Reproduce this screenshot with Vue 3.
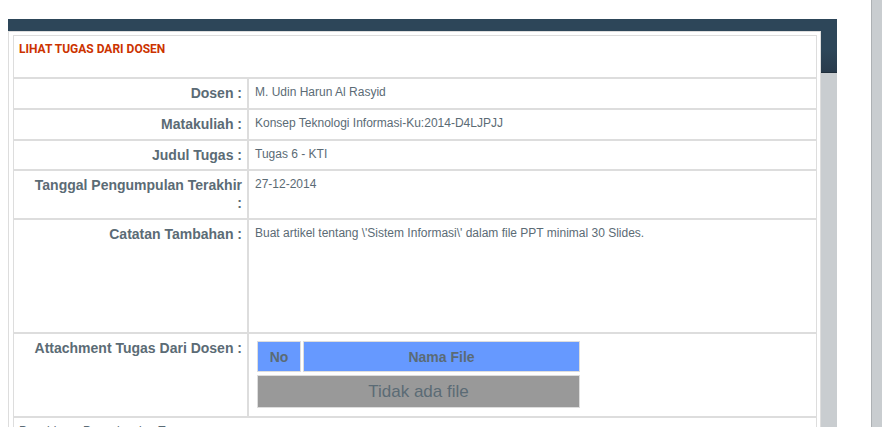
<script setup>
const details = [
  { label: 'Dosen :', value: 'M. Udin Harun Al Rasyid', size: 'row' },
  { label: 'Matakuliah :', value: 'Konsep Teknologi Informasi-Ku:2014-D4LJPJJ', size: 'row' },
  { label: 'Judul Tugas :', value: 'Tugas 6 - KTI', size: 'row short' },
  { label: 'Tanggal Pengumpulan Terakhir :', value: '27-12-2014', size: 'row double' },
  {
    label: 'Catatan Tambahan :',
    value: "Buat artikel tentang \\'Sistem Informasi\\' dalam file PPT minimal 30 Slides.",
    size: 'row tall',
  },
]
</script>

<template>
  <div class="page">
    <main class="content">
      <div class="panel">
        <table class="details">
          <colgroup>
            <col class="label-col" />
            <col />
          </colgroup>
          <tbody>
            <tr class="heading">
              <td colspan="2"><h1>LIHAT TUGAS DARI DOSEN</h1></td>
            </tr>
            <tr v-for="item in details" :key="item.label" :class="item.size">
              <th scope="row">{{ item.label }}</th>
              <td>{{ item.value }}</td>
            </tr>
            <tr class="attachment">
              <th scope="row">Attachment Tugas Dari Dosen :</th>
              <td>
                <table class="files">
                  <thead>
                    <tr>
                      <th scope="col" class="number">No</th>
                      <th scope="col">Nama File</th>
                    </tr>
                  </thead>
                  <tbody>
                    <tr>
                      <td colspan="2">Tidak ada file</td>
                    </tr>
                  </tbody>
                </table>
              </td>
            </tr>
            <tr class="submission">
              <td colspan="2">Pengiriman Penyelesaian Tugas</td>
            </tr>
          </tbody>
        </table>
      </div>
    </main>
    <div class="edge"></div>
  </div>
</template>

<style>
body {
  margin: 0;
  background: #fff;
}
</style>

<style scoped>
.page {
  display: flex;
  gap: 34px;
  height: 100vh;
  overflow: hidden;
  font-family: "Liberation Sans", Arial, sans-serif;
  font-size: 12px;
  line-height: 16px;
  color: #5b6b75;
}
.content {
  flex: 1;
  align-self: flex-start;
  box-sizing: border-box;
  margin: 19px 0 0 8px;
  padding: 12px 16px 0 0;
  background: linear-gradient(#2d4659 0, #2d4659 30px, #293b4c 53px, #1f2e3b 53px, #1f2e3b 54px, #c9cdd0 54px);
}
.panel {
  padding: 3px 3px 3px 4px;
  border: 1px solid #ddd;
  background: #fff;
}
.edge {
  flex: 0 0 10px;
  border-left: 1px solid #adb1b4;
  background: #c9cdd0;
}
.details {
  width: 100%;
  table-layout: fixed;
  border-collapse: separate;
  border-spacing: 0;
}
.label-col {
  width: 235px;
}
.details > tbody > tr > th,
.details > tbody > tr > td {
  box-sizing: border-box;
  padding: 5px;
  border: 1px solid #ddd;
  vertical-align: top;
  text-align: left;
}
.details > tbody > tr > th {
  padding-left: 14px;
  font-size: 14px;
  line-height: 18px;
  text-align: right;
}
.details > tbody > tr > td {
  padding-left: 6px;
}
.heading {
  height: 43px;
}
.details > tbody > .heading > td,
.details > tbody > .submission > td {
  padding-left: 5px;
}
.details > tbody > .attachment > td {
  padding: 4px 6px;
}
h1 {
  margin: 0;
  font-family: Roboto, "Liberation Sans", sans-serif;
  font-size: 12px;
  line-height: 16px;
  color: #c30;
}
.row {
  height: 31px;
}
.short {
  height: 30px;
}
.double {
  height: 49px;
}
.tall {
  height: 114px;
}
.attachment {
  height: 84px;
}
.submission {
  height: 43px;
}
.files {
  width: 327px;
  table-layout: fixed;
  border-collapse: separate;
  border-spacing: 2px 3px;
}
.files th,
.files td {
  box-sizing: border-box;
  padding: 5px;
  border: 1px solid #ddd;
  text-align: center;
}
.files th {
  height: 31px;
  font-size: 14px;
  background: #69f;
}
.files .number {
  width: 44px;
}
.files td {
  height: 33px;
  font-size: 17px;
  background: #999;
}
</style>
